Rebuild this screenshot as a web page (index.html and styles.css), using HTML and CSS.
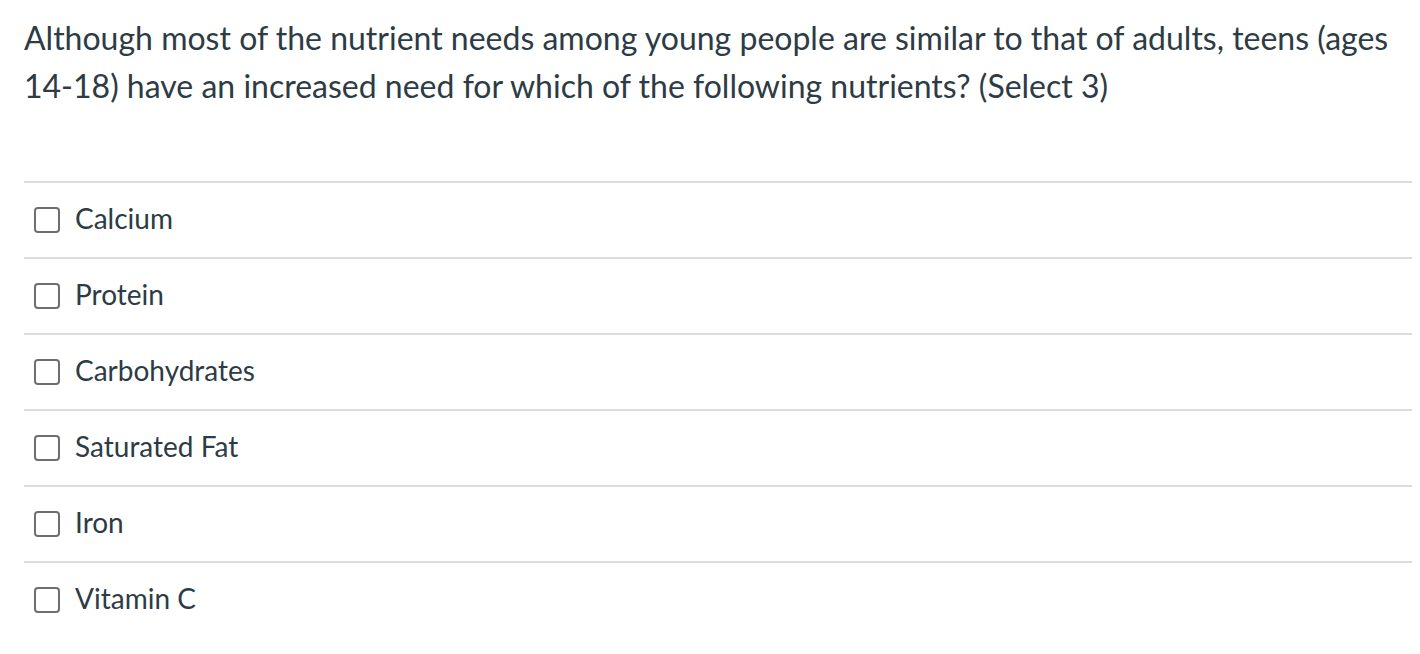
FILE: index.html
```html
<!DOCTYPE html>
<html>
<head>
<meta charset="utf-8">
<link rel="stylesheet" href="styles.css">
</head>
<body>
<div class="quiz">
  <p class="question">Although most of the nutrient needs among young people are similar to that of adults, teens (ages 14-18) have an increased need for which of the following nutrients? (Select 3)</p>
  <div class="answers">
    <label class="answer"><span class="box"></span><span class="label">Calcium</span></label>
    <label class="answer"><span class="box"></span><span class="label">Protein</span></label>
    <label class="answer"><span class="box"></span><span class="label">Carbohydrates</span></label>
    <label class="answer"><span class="box"></span><span class="label">Saturated Fat</span></label>
    <label class="answer"><span class="box"></span><span class="label">Iron</span></label>
    <label class="answer"><span class="box"></span><span class="label">Vitamin C</span></label>
  </div>
</div>
</body>
</html>
```
FILE: styles.css
```css
html, body {
  margin: 0;
  padding: 0;
  background: #ffffff;
}
body {
  font-family: Lato, "Open Sans", sans-serif;
  color: #2d3b45;
}
.quiz {
  padding: 14px 8px 0 24px;
}
.question {
  margin: 0;
  font-size: 32px;
  line-height: 48px;
}
.answers {
  margin-top: 71px;
}
.answer {
  display: flex;
  align-items: center;
  height: 74px;
  border-top: 2px solid #dcdcdc;
  padding-left: 10px;
  gap: 15px;
}
.box {
  width: 22px;
  height: 22px;
  border: 2px solid #6f6f6f;
  border-radius: 4px;
  flex: none;
}
.label {
  font-size: 28px;
  padding-bottom: 4px;
}
```
